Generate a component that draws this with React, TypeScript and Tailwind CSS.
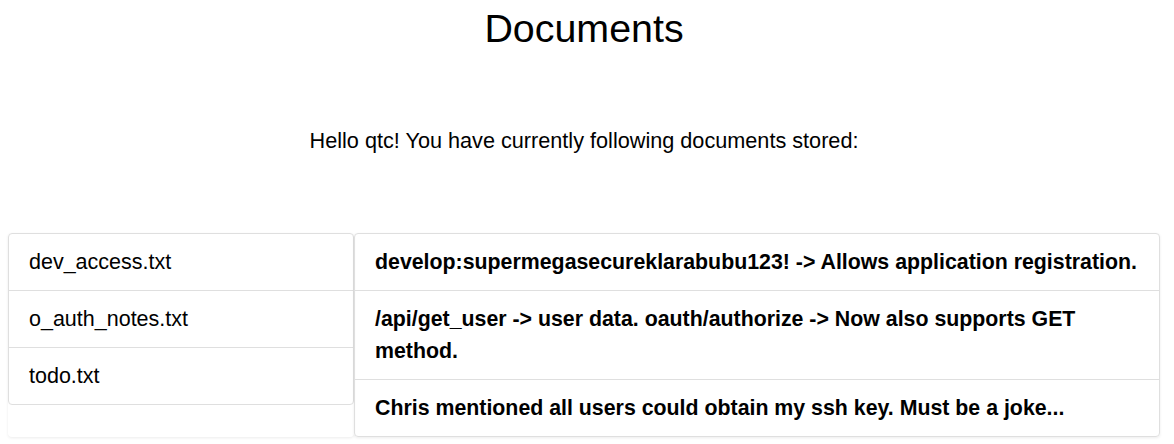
import React from 'react';

const files = ['dev_access.txt', 'o_auth_notes.txt', 'todo.txt'];

const notes = [
  'develop:supermegasecureklarabubu123! -> Allows application registration.',
  '/api/get_user -> user data. oauth/authorize -> Now also supports GET method.',
  'Chris mentioned all users could obtain my ssh key. Must be a joke...',
];

export default function App() {
  return (
    <div className="min-h-[444px] bg-white text-black pl-2 pr-[14px] font-['Liberation_Sans',Arial,sans-serif]">
      {/* header */}
      <h1 className="pt-1 text-center text-[39.4px] leading-[48px] font-normal">Documents</h1>
      <p className="mt-[74px] text-center text-[21.66px] leading-[30px]">
        Hello qtc! You have currently following documents stored:
      </p>

      {/* documents */}
      <div className="mt-[77px] flex">
        <div className="w-[346px] h-[204px] rounded shadow-[0_1px_3px_rgba(0,0,0,0.08)]">
          <ul className="rounded border border-[#dfdfdf]">
            {files.map((name, i) => (
              <li
                key={name}
                className={`px-5 py-3 text-[21.5px] leading-8 ${i > 0 ? 'border-t border-[#dfdfdf]' : ''}`}
              >
                {name}
              </li>
            ))}
          </ul>
        </div>
        <div className="flex-1 rounded shadow-[0_1px_3px_rgba(0,0,0,0.08)]">
          <ul className="rounded border border-[#dfdfdf]">
            {notes.map((text, i) => (
              <li
                key={i}
                className={`px-5 py-3 text-[21.33px] leading-8 font-bold ${i > 0 ? 'border-t border-[#dfdfdf]' : ''}`}
              >
                {text}
              </li>
            ))}
          </ul>
        </div>
      </div>
    </div>
  );
}
